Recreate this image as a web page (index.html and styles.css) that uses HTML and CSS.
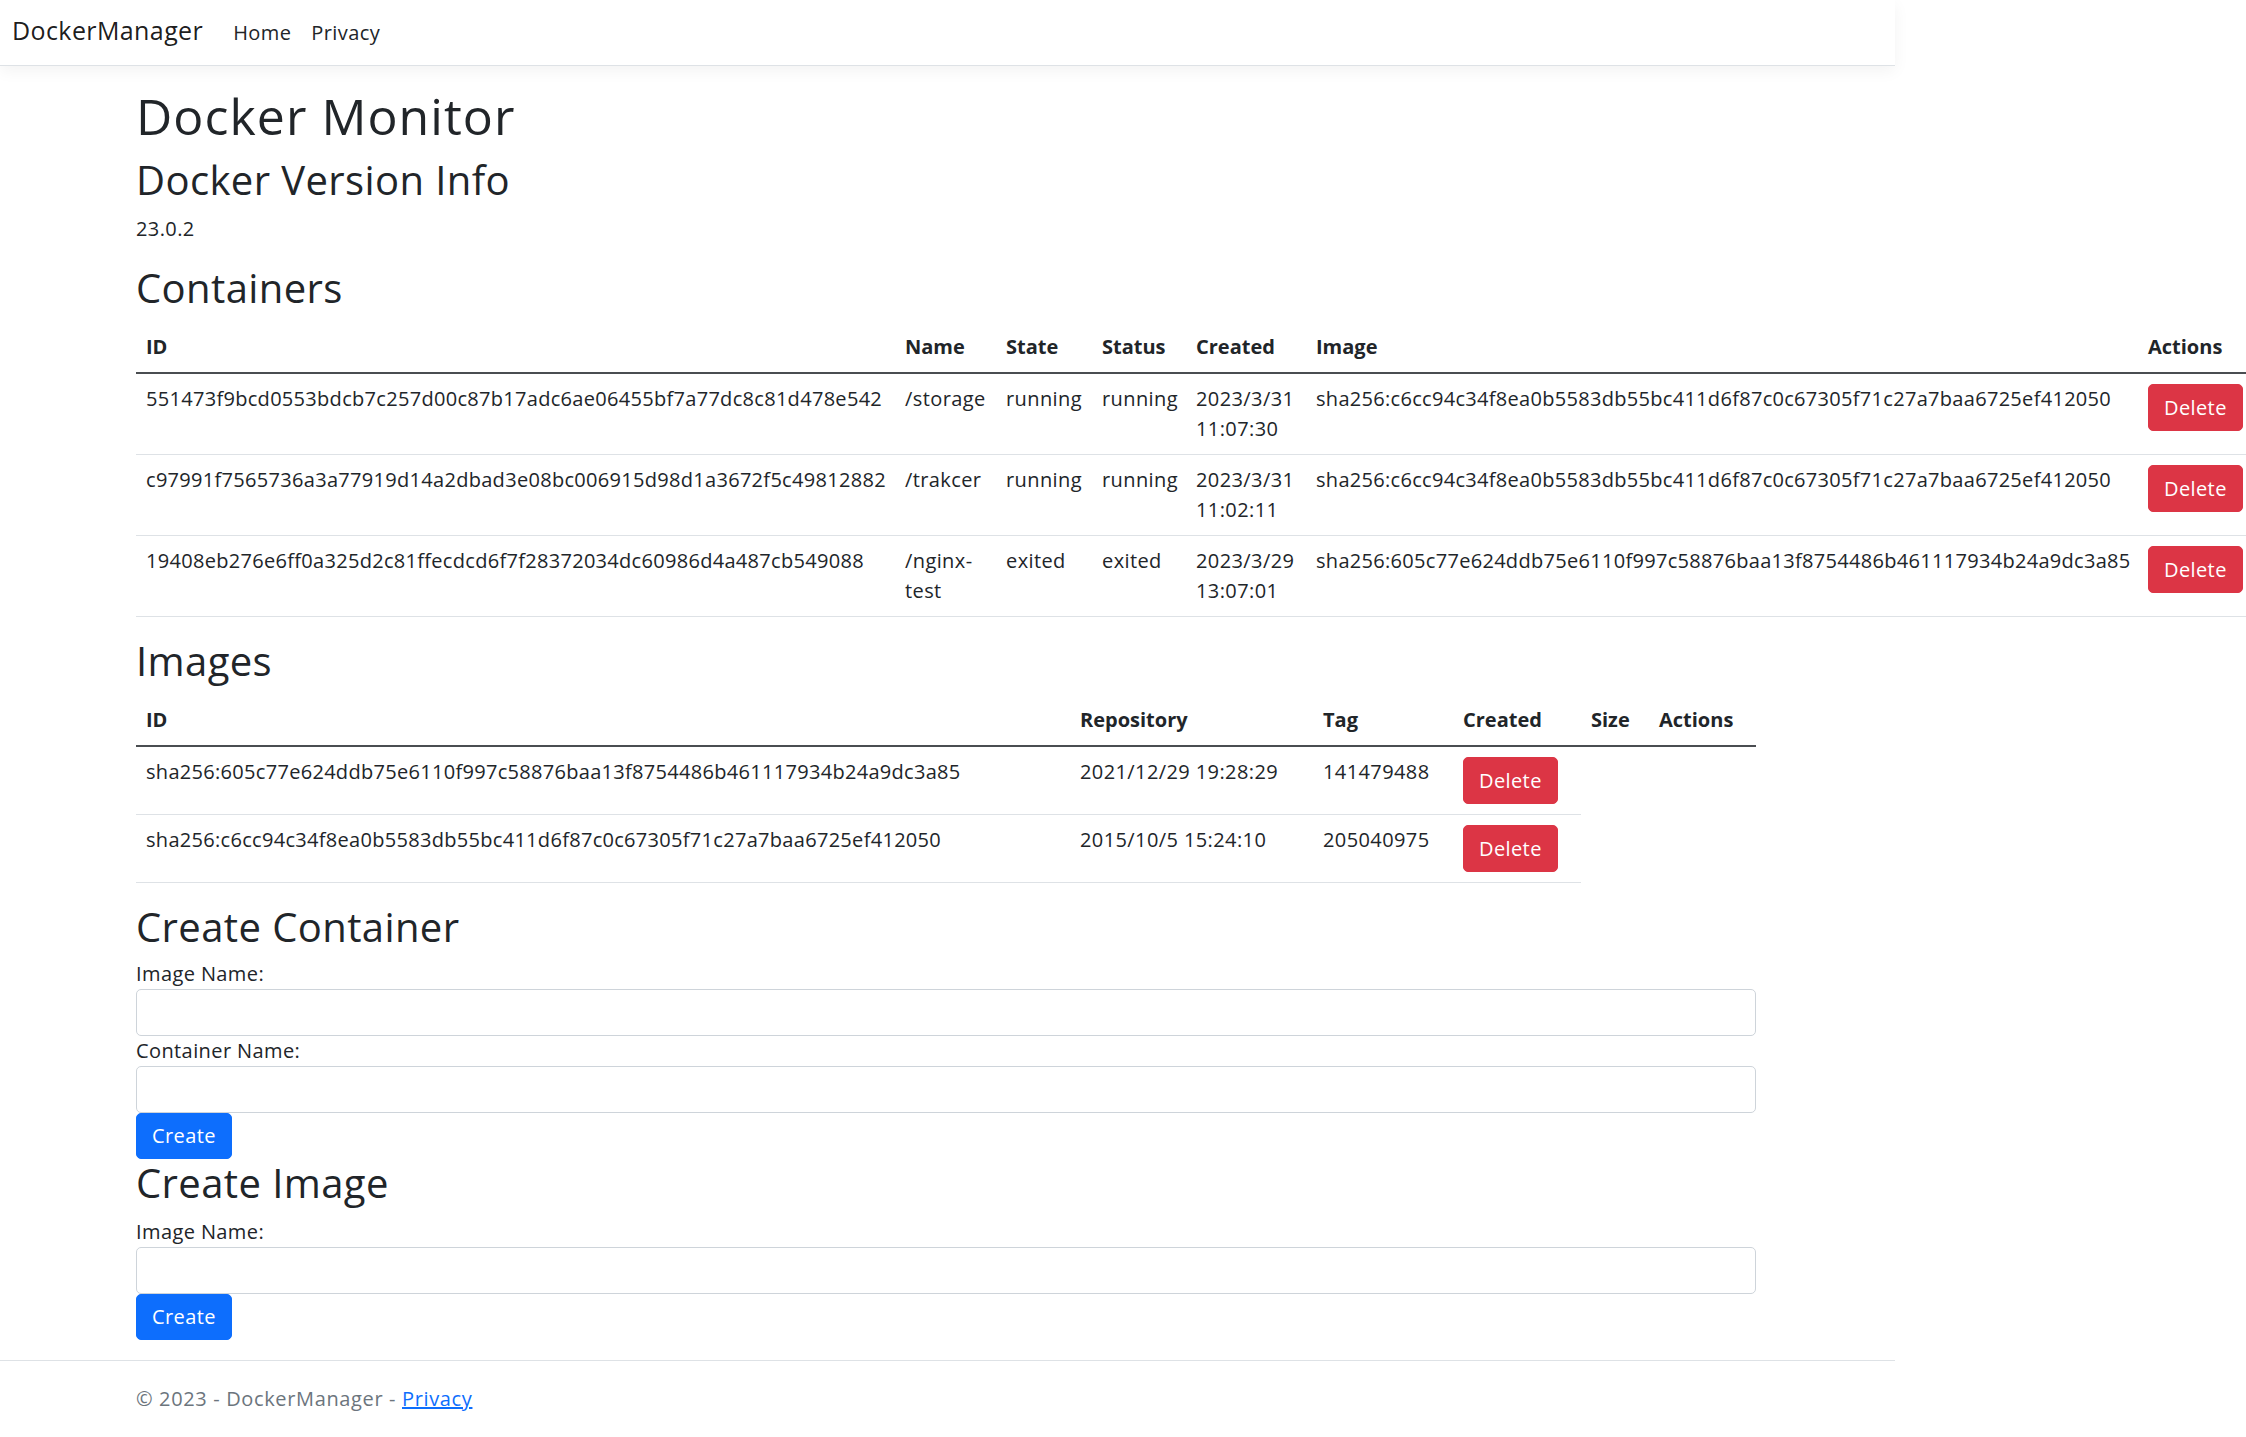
FILE: index.html
```html
<!DOCTYPE html>
<html lang="en">
<head>
<meta charset="utf-8">
<title>Docker Monitor - DockerManager</title>
<link rel="stylesheet" href="styles.css">
</head>
<body>
<div class="page">
<header>
  <nav class="navbar">
    <div class="nav-inner">
      <a class="brand" href="#">DockerManager</a>
      <ul class="nav">
        <li><a class="nav-link" href="#">Home</a></li>
        <li><a class="nav-link" href="#">Privacy</a></li>
      </ul>
    </div>
  </nav>
</header>
<div class="container">
  <main class="main">
    <h1>Docker Monitor</h1>
    <h2>Docker Version Info</h2>
    <p>23.0.2</p>

    <h2>Containers</h2>
    <table class="table table-fixed containers-table">
      <colgroup>
        <col class="c-id">
        <col class="c-name">
        <col class="c-state">
        <col class="c-status">
        <col class="c-created">
        <col class="c-image">
        <col class="c-actions">
      </colgroup>
      <thead>
        <tr>
          <th>ID</th>
          <th>Name</th>
          <th>State</th>
          <th>Status</th>
          <th>Created</th>
          <th>Image</th>
          <th>Actions</th>
        </tr>
      </thead>
      <tbody>
        <tr>
          <td class="hash">551473f9bcd0553bdcb7c257d00c87b17adc6ae06455bf7a77dc8c81d478e542</td>
          <td>/storage</td>
          <td>running</td>
          <td>running</td>
          <td>2023/3/31 11:07:30</td>
          <td class="hash">sha256:c6cc94c34f8ea0b5583db55bc411d6f87c0c67305f71c27a7baa6725ef412050</td>
          <td><button class="btn btn-danger" type="button">Delete</button></td>
        </tr>
        <tr>
          <td class="hash">c97991f7565736a3a77919d14a2dbad3e08bc006915d98d1a3672f5c49812882</td>
          <td>/trakcer</td>
          <td>running</td>
          <td>running</td>
          <td>2023/3/31 11:02:11</td>
          <td class="hash">sha256:c6cc94c34f8ea0b5583db55bc411d6f87c0c67305f71c27a7baa6725ef412050</td>
          <td><button class="btn btn-danger" type="button">Delete</button></td>
        </tr>
        <tr>
          <td class="hash">19408eb276e6ff0a325d2c81ffecdcd6f7f28372034dc60986d4a487cb549088</td>
          <td>/nginx-test</td>
          <td>exited</td>
          <td>exited</td>
          <td>2023/3/29 13:07:01</td>
          <td class="hash">sha256:605c77e624ddb75e6110f997c58876baa13f8754486b461117934b24a9dc3a85</td>
          <td><button class="btn btn-danger" type="button">Delete</button></td>
        </tr>
      </tbody>
    </table>

    <h2>Images</h2>
    <table class="table table-fixed">
      <colgroup>
        <col class="i-id">
        <col class="i-repo">
        <col class="i-tag">
        <col class="i-created">
        <col class="i-size">
        <col class="i-actions">
      </colgroup>
      <thead>
        <tr>
          <th>ID</th>
          <th>Repository</th>
          <th>Tag</th>
          <th>Created</th>
          <th>Size</th>
          <th>Actions</th>
        </tr>
      </thead>
      <tbody>
        <tr>
          <td class="hash">sha256:605c77e624ddb75e6110f997c58876baa13f8754486b461117934b24a9dc3a85</td>
          <td>2021/12/29 19:28:29</td>
          <td>141479488</td>
          <td><button class="btn btn-danger" type="button">Delete</button></td>
        </tr>
        <tr>
          <td class="hash">sha256:c6cc94c34f8ea0b5583db55bc411d6f87c0c67305f71c27a7baa6725ef412050</td>
          <td>2015/10/5 15:24:10</td>
          <td>205040975</td>
          <td><button class="btn btn-danger" type="button">Delete</button></td>
        </tr>
      </tbody>
    </table>

    <h2 class="form-title">Create Container</h2>
    <form class="form">
      <label for="imageName">Image Name:</label>
      <input class="form-control" id="imageName" type="text">
      <label for="containerName">Container Name:</label>
      <input class="form-control" id="containerName" type="text">
      <button class="btn btn-primary" type="button">Create</button>
    </form>

    <h2>Create Image</h2>
    <form class="form">
      <label for="newImageName">Image Name:</label>
      <input class="form-control" id="newImageName" type="text">
      <button class="btn btn-primary" type="button">Create</button>
    </form>
  </main>
</div>
<footer class="footer">
  <div class="container">
    &copy; 2023 - DockerManager - <a href="#">Privacy</a>
  </div>
</footer>
</div>
</body>
</html>
```

FILE: styles.css
```css
body {
  margin: 0;
  font-family: "Open Sans", "Noto Sans", sans-serif;
  font-size: 20px;
  line-height: 1.5;
  letter-spacing: 0.02em;
  color: #212529;
  background: #fff;
}

.page {
  width: 1895px;
}

.navbar {
  height: 66px;
  box-sizing: border-box;
  background: #fff;
  border-bottom: 1px solid #dee2e6;
  box-shadow: 0 5px 15px rgba(0, 0, 0, 0.05);
  margin-bottom: 20px;
}

.nav-inner {
  display: flex;
  align-items: baseline;
  padding: 12px 12px 0;
}

.brand {
  font-size: 25px;
  line-height: 37.5px;
  color: rgba(0, 0, 0, 0.9);
  text-decoration: none;
  margin-right: 20px;
}

.nav {
  display: flex;
  list-style: none;
  margin: 0;
  padding: 0;
}

.nav-link {
  display: block;
  padding: 0 10px;
  color: #212529;
  text-decoration: none;
  line-height: 30px;
}

.container {
  max-width: 1650px;
  margin: 0 auto;
  padding: 0 16.5px 0 13.5px;
  box-sizing: border-box;
}

.main {
  padding-bottom: 20px;
}

h1 {
  font-size: 50px;
  line-height: 1.2;
  font-weight: 400;
  letter-spacing: 0.021em;
  margin: 0 0 10px;
}

h2 {
  font-size: 40px;
  line-height: 1.2;
  font-weight: 400;
  margin: 0 0 10px;
}

h2.form-title {
  margin-bottom: 8px;
}

p {
  margin: 0 0 20px;
}

.table {
  width: 100%;
  border-collapse: collapse;
  margin-bottom: 20px;
  color: #212529;
}

.table-fixed {
  table-layout: fixed;
}

.containers-table {
  width: 2110px;
}

.c-id { width: 759px; }
.c-name { width: 101px; }
.c-state { width: 96px; }
.c-status { width: 94px; }
.c-created { width: 120px; }
.c-image { width: 832px; }
.c-actions { width: 108px; }

.i-id { width: 934px; }
.i-repo { width: 243px; }
.i-tag { width: 140px; }
.i-created { width: 128px; }
.i-size { width: 68px; }
.i-actions { width: 107px; }

.table th,
.table td {
  padding: 10px;
  text-align: left;
  vertical-align: top;
  border-bottom: 1px solid #dee2e6;
}

.table thead th {
  font-weight: 700;
  letter-spacing: 0;
  border-bottom: 2px solid #4a4d51;
}

.table td.hash {
  letter-spacing: 0.015em;
  white-space: nowrap;
}

.btn {
  display: inline-block;
  font-family: inherit;
  font-size: 20px;
  line-height: 30px;
  letter-spacing: 0.02em;
  padding: 7.5px 15px;
  border: 1px solid transparent;
  border-radius: 5px;
  color: #fff;
  cursor: pointer;
}

.btn-danger {
  background: #dc3545;
  border-color: #dc3545;
}

.btn-primary {
  background: #0d6efd;
  border-color: #0d6efd;
  padding: 7px 15px;
}

.form {
  display: flex;
  flex-direction: column;
  align-items: flex-start;
}

.form label {
  line-height: 30px;
}

.form-control {
  align-self: stretch;
  box-sizing: border-box;
  height: 47px;
  padding: 7px 15px;
  font: inherit;
  color: #212529;
  border: 1px solid #ced4da;
  border-radius: 5px;
  background: #fff;
}

.footer {
  border-top: 1px solid #dee2e6;
  padding-top: 8px;
  line-height: 60px;
  letter-spacing: 0.032em;
  color: #6c757d;
  white-space: nowrap;
}

.footer a {
  color: #0d6efd;
  text-decoration: underline;
}
```
